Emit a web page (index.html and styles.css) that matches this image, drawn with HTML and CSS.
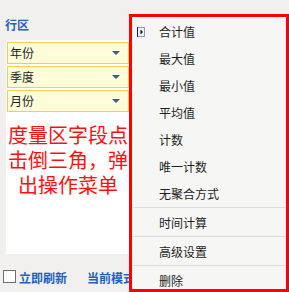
FILE: index.html
```html
<!DOCTYPE html>
<html lang="zh-CN">
<head>
    <meta charset="UTF-8">
    <meta name="viewport" content="width=device-width, initial-scale=1.0">
    <title>字段菜单</title>
    <link rel="stylesheet" href="styles.css">
</head>
<body>
    <div class="sidebar">
        <div class="zone-title">行区</div>

        <div class="zone">
            <div class="field">年份<span class="caret"></span></div>
            <div class="field">季度<span class="caret"></span></div>
            <div class="field">月份<span class="caret"></span></div>
            <p class="note">度量区字段点<br>击倒三角，弹<br>出操作菜单</p>
        </div>

        <div class="footer">
            <span class="check"></span>
            <span class="link">立即刷新</span>
            <span class="link mode">当前模式</span>
        </div>
    </div>

    <!-- popup menu opened from the field caret -->
    <ul class="context-menu">
        <li>
            <span class="mark">
                <svg width="8" height="10" viewBox="0 0 8 10">
                    <rect x="0.5" y="0.5" width="7" height="9" fill="#eef0f8" stroke="#8d99c0"/>
                    <path d="M0.5 0v10" stroke="#1d2b63"/>
                    <path d="M3.5 2.5L6 5L3.5 7.5z" fill="#111"/>
                </svg>
            </span>合计值
        </li>
        <li><span class="mark"></span>最大值</li>
        <li><span class="mark"></span>最小值</li>
        <li><span class="mark"></span>平均值</li>
        <li><span class="mark"></span>计数</li>
        <li><span class="mark"></span>唯一计数</li>
        <li><span class="mark"></span>无聚合方式</li>
        <li class="sep"></li>
        <li><span class="mark"></span>时间计算</li>
        <li class="sep"></li>
        <li><span class="mark"></span>高级设置</li>
        <li class="sep"></li>
        <li><span class="mark"></span>删除</li>
    </ul>
</body>
</html>
```

FILE: styles.css
```css
* {
    box-sizing: border-box;
}

body {
    margin: 0;
    height: 292px;
    overflow: hidden;
    background: #f1f0ee;
    font-family: "Noto Sans CJK SC", sans-serif;
    font-size: 12px;
    color: #1e1e1e;
}

.sidebar {
    width: 130px;
}

.zone-title {
    height: 40px;
    padding: 17px 0 0 5px;
    line-height: 16px;
    font-weight: bold;
    color: #2162c0;
}

.zone {
    margin-left: 6px;
    height: 214px;
    padding: 2px 1px 0 1px;
    background: #fff;
}

.field {
    display: flex;
    align-items: center;
    justify-content: space-between;
    height: 22px;
    margin-bottom: 2px;
    padding: 0 8px 0 2px;
    border: 1px solid #f4cc4f;
    background: #fffcd9;
    line-height: 20px;
}

.caret {
    width: 0;
    height: 0;
    border-left: 4px solid transparent;
    border-right: 4px solid transparent;
    border-top: 4px solid #3e5c82;
}

.note {
    margin: 10px 0 0;
    text-align: center;
    font-size: 20px;
    line-height: 25px;
    color: #ff1010;
}

.footer {
    display: flex;
    align-items: flex-start;
    padding: 16px 0 0 3px;
    white-space: nowrap;
    line-height: 16px;
    font-weight: bold;
    color: #1f60c0;
}

.footer span {
    flex: none;
}

.check {
    width: 13px;
    height: 13px;
    margin-right: 3px;
    border: 1px solid #707070;
    background: #fff;
}

.mode {
    margin-left: 20px;
}

.context-menu {
    position: absolute;
    left: 129px;
    top: 14px;
    width: 160px;
    height: 278px;
    margin: 0;
    padding: 1px 0 0;
    list-style: none;
    overflow: hidden;
    border: 3px solid #ff0000;
    background: #f6f6f4;
}

.context-menu li {
    display: flex;
    align-items: center;
    height: 27px;
    padding-left: 5px;
    line-height: 27px;
}

.context-menu .sep {
    height: 2px;
    margin-left: 1px;
    padding: 0;
    border-top: 1px solid #dcdcda;
}

.mark {
    flex: none;
    display: flex;
    width: 8px;
    height: 10px;
    margin-right: 14px;
}
```
